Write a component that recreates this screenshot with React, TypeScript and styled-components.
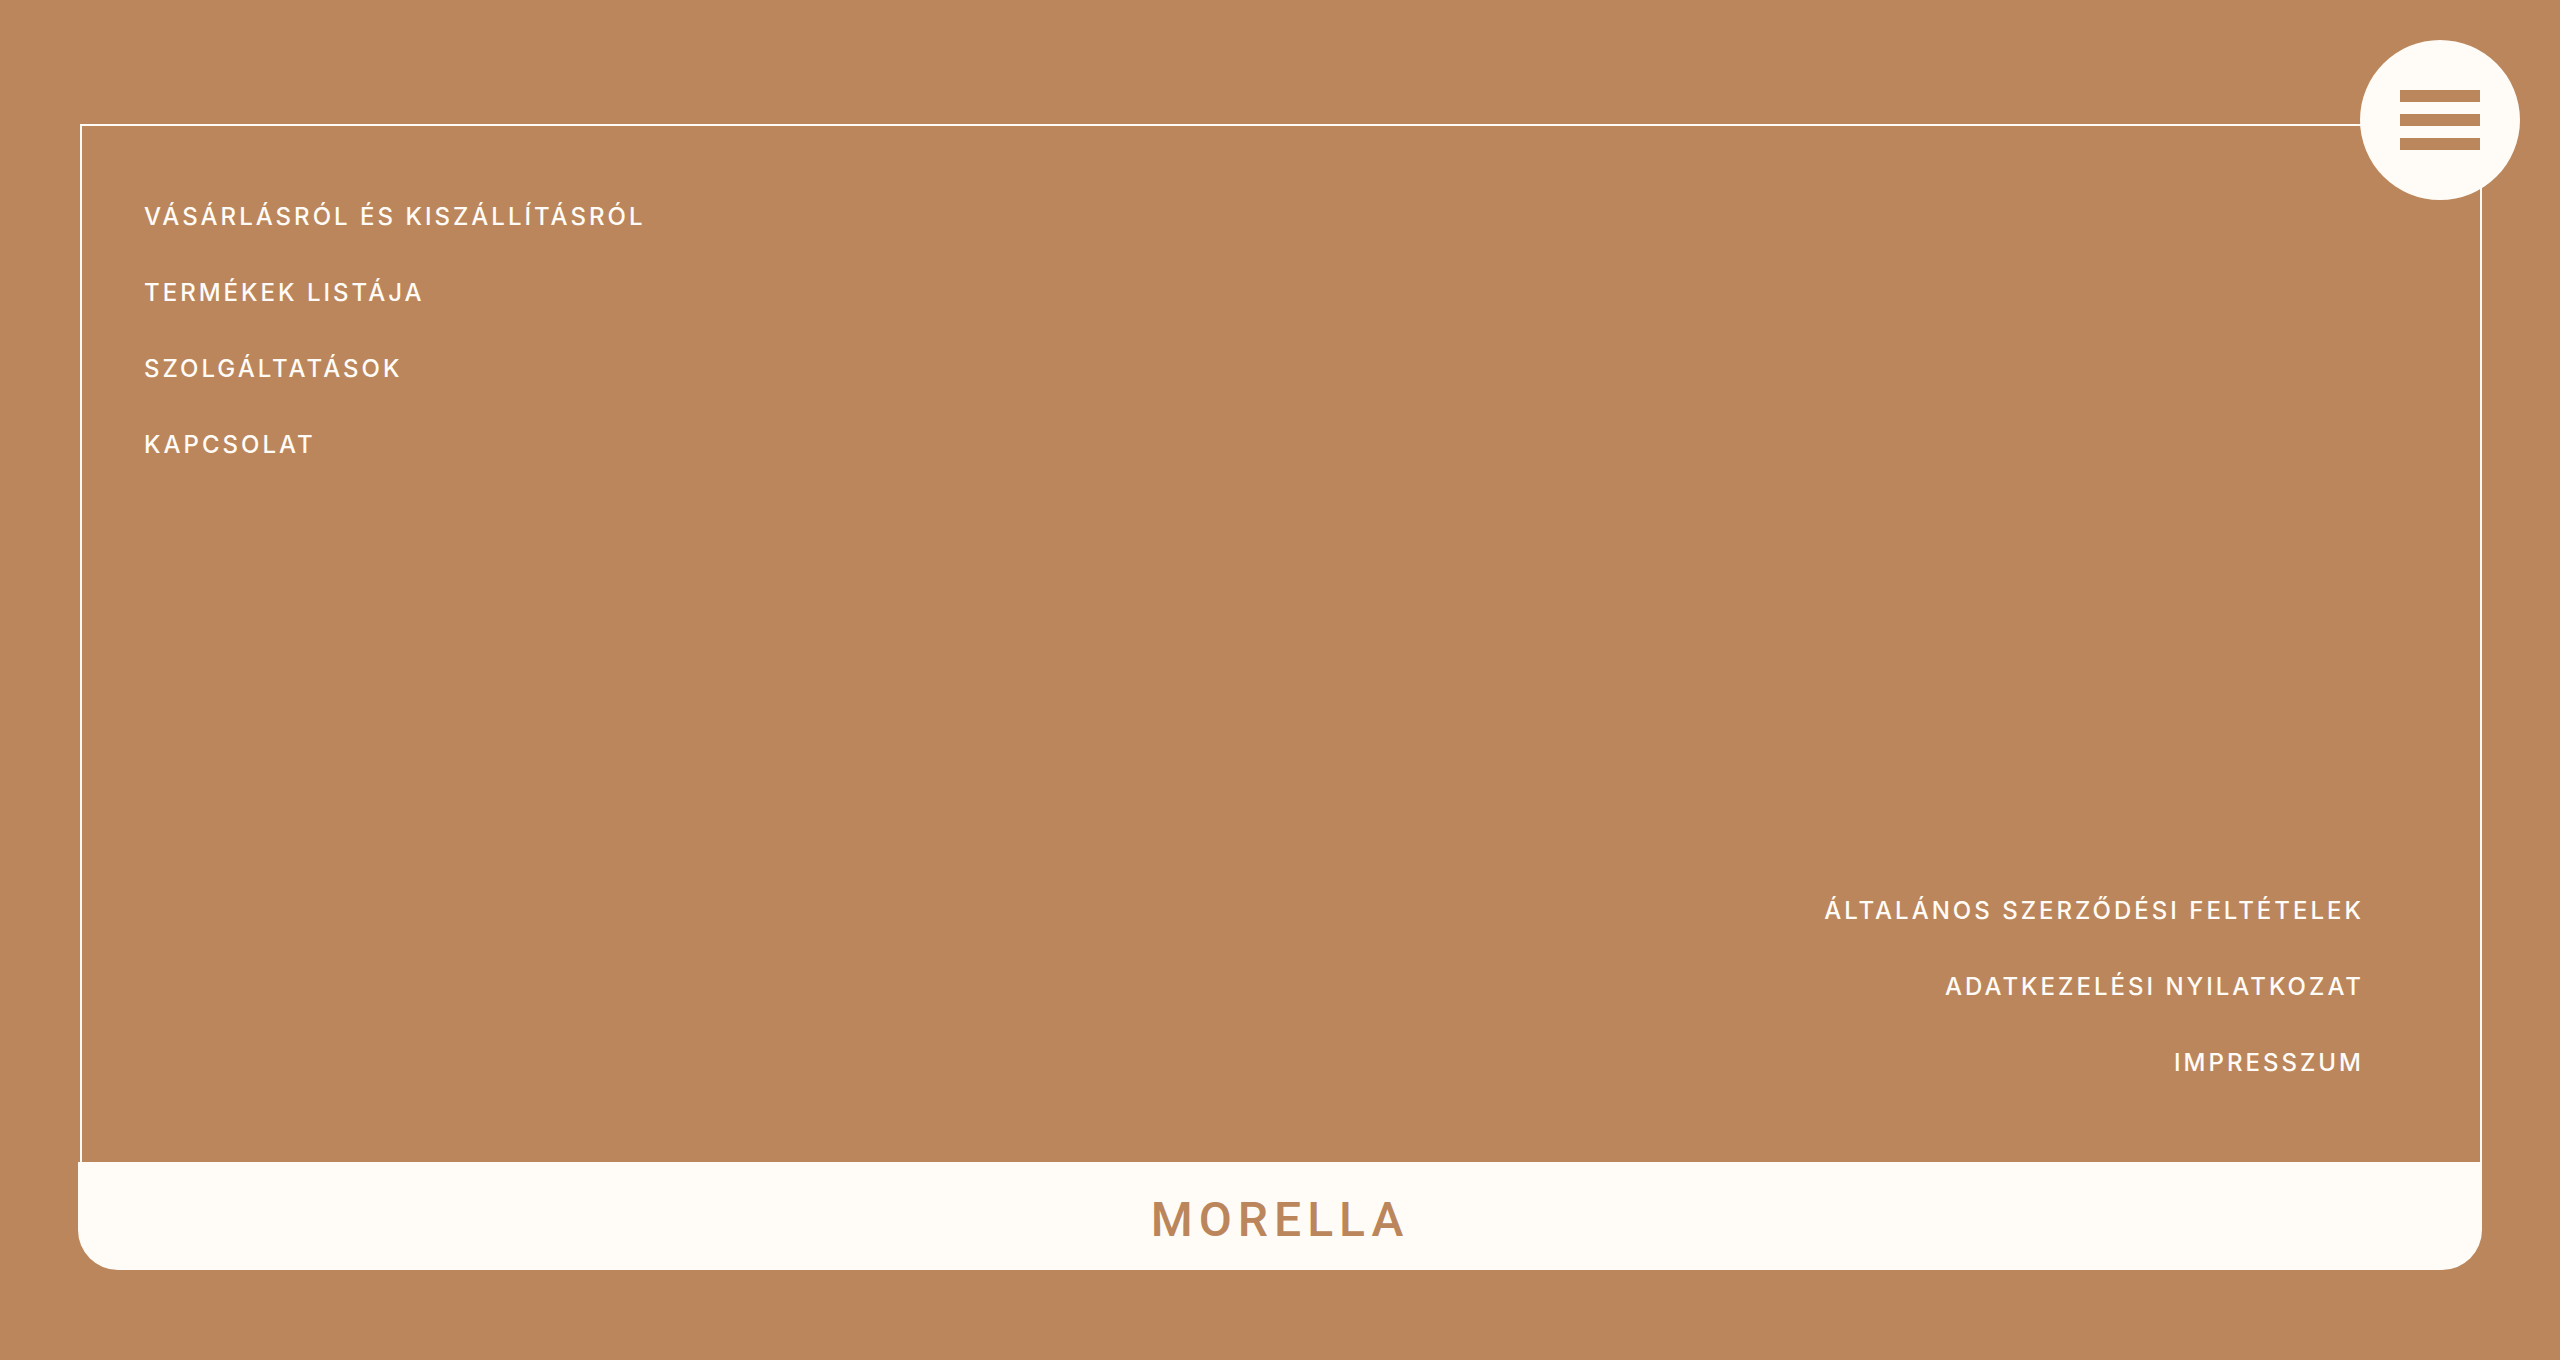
import React from "react";
import styled, { createGlobalStyle } from "styled-components";

const clay = "#bb865b";
const cream = "#fffcf7";

const GlobalStyle = createGlobalStyle`
  *, *::before, *::after { box-sizing: border-box; }
  body {
    margin: 0;
    background: ${clay};
    font-family: Inter, "Noto Sans", sans-serif;
  }
`;

const Page = styled.div`
  position: relative;
  display: flex;
  flex-direction: column;
  min-height: 100vh;
  padding: 124px 78px 90px;
  background: ${clay};
  color: ${cream};
`;

const Frame = styled.main`
  flex: 1;
  display: flex;
  flex-direction: column;
  justify-content: space-between;
  gap: 80px;
  margin-left: 2px;
  padding: 73px 116px 81px 62px;
  border: 2px solid ${cream};
  border-bottom: 0;
`;

const LinkList = styled.nav<{ $end?: boolean }>`
  display: flex;
  flex-direction: column;
  align-items: ${(p) => (p.$end ? "flex-end" : "flex-start")};
  gap: 40px;
`;

const MenuLink = styled.a`
  color: inherit;
  font-size: 24px;
  line-height: 36px;
  font-weight: 500;
  letter-spacing: 3px;
  text-transform: uppercase;
  text-decoration: none;
`;

const Footer = styled.footer`
  display: flex;
  align-items: center;
  justify-content: center;
  height: 108px;
  padding-top: 8px;
  border-radius: 0 0 40px 40px;
  background: ${cream};
`;

const Brand = styled.a`
  color: ${clay};
  font-family: Roboto, Inter, sans-serif;
  font-size: 48px;
  line-height: 60px;
  font-weight: 500;
  letter-spacing: 6px;
  text-decoration: none;
`;

const MenuButton = styled.button`
  position: absolute;
  top: 40px;
  right: 40px;
  display: flex;
  flex-direction: column;
  align-items: center;
  justify-content: center;
  gap: 12px;
  width: 160px;
  height: 160px;
  padding: 0;
  border: 0;
  border-radius: 50%;
  background: ${cream};
  cursor: pointer;
`;

const Bar = styled.span`
  width: 80px;
  height: 12px;
  background: ${clay};
`;

const shopLinks = [
  "Vásárlásról és kiszállításról",
  "Termékek listája",
  "Szolgáltatások",
  "Kapcsolat",
];

const legalLinks = [
  "Általános szerződési feltételek",
  "Adatkezelési nyilatkozat",
  "Impresszum",
];

export default function App() {
  return (
    <Page lang="hu">
      <GlobalStyle />
      <Frame>
        <LinkList>
          {shopLinks.map((label) => (
            <MenuLink href="#" key={label}>{label}</MenuLink>
          ))}
        </LinkList>
        <LinkList $end>
          {legalLinks.map((label) => (
            <MenuLink href="#" key={label}>{label}</MenuLink>
          ))}
        </LinkList>
      </Frame>
      <Footer>
        <Brand href="#">MORELLA</Brand>
      </Footer>
      <MenuButton type="button" aria-label="Menü">
        <Bar />
        <Bar />
        <Bar />
      </MenuButton>
    </Page>
  );
}
